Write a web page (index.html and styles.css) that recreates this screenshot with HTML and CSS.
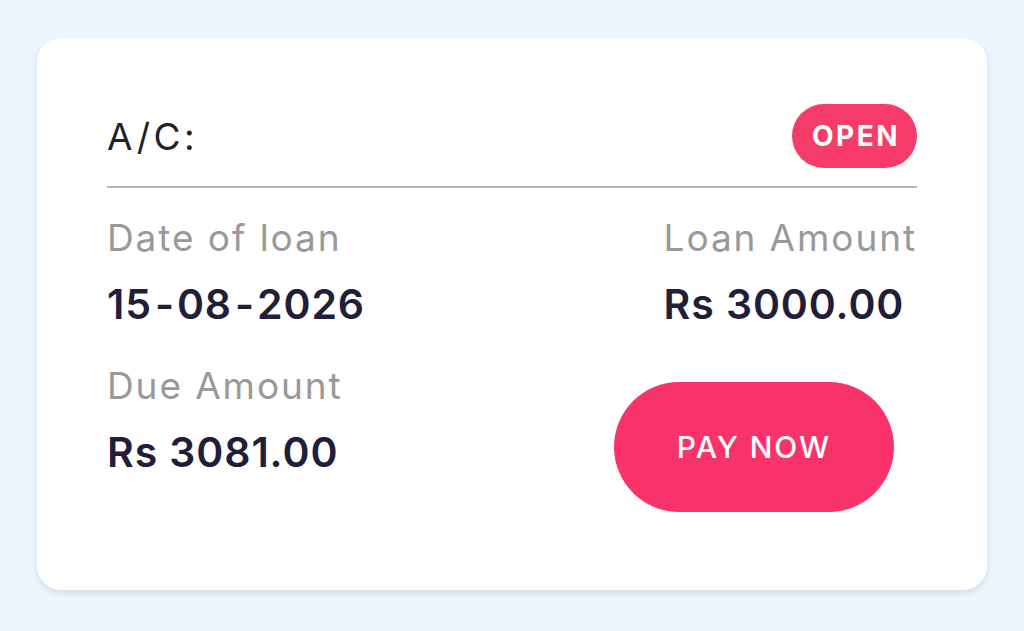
FILE: index.html
```html
<!DOCTYPE html>
<html lang="en">
<head>
<meta charset="utf-8">
<title>Loan card</title>
<link rel="stylesheet" href="styles.css">
</head>
<body>
<div class="page">
  <div class="card">
    <div class="head">
      <span class="acct">A/C:</span>
      <span class="badge">OPEN</span>
    </div>
    <div class="divider"></div>
    <div class="grid">
      <div class="cell">
        <div class="label">Date of loan</div>
        <div class="value date">15<span class="dash">-</span>08<span class="dash">-</span>2026</div>
      </div>
      <div class="cell right">
        <div class="stack">
          <div class="label">Loan Amount</div>
          <div class="value">Rs 3000.00</div>
        </div>
      </div>
      <div class="cell">
        <div class="label">Due Amount</div>
        <div class="value">Rs 3081.00</div>
      </div>
      <div class="cell right">
        <button class="pay">PAY NOW</button>
      </div>
    </div>
  </div>
</div>
</body>
</html>
```
FILE: styles.css
```css
* { box-sizing: border-box; }
html, body { margin: 0; padding: 0; }
body {
  background: #eef6fd;
  font-family: Inter, "Noto Sans", sans-serif;
  width: 1024px;
  height: 631px;
  overflow: hidden;
}
.page {
  padding: 38px 37px 0 37px;
}
.card {
  background: #ffffff;
  border-radius: 24px;
  height: 552px;
  padding: 0 70px;
  box-shadow: 0 3px 6px rgba(150, 170, 190, 0.35);
}
.head {
  display: flex;
  justify-content: space-between;
  align-items: center;
  padding-top: 66px;
  height: 130px;
}
.acct {
  font-size: 37px;
  color: #222226;
  letter-spacing: 3.5px;
}
.badge {
  background: #f53b68;
  color: #fff;
  font-weight: 700;
  font-size: 28px;
  letter-spacing: 2.5px;
  height: 64px;
  line-height: 64px;
  padding: 0 17px 0 20px;
  border-radius: 32px;
}
.divider {
  height: 2px;
  background: #adb5bd;
  margin-top: 18px;
}
.grid {
  display: grid;
  grid-template-columns: 1fr 1fr;
  row-gap: 28px;
  padding-top: 26px;
}
.cell.right {
  display: flex;
  flex-direction: column;
  align-items: flex-end;
}
.stack {
  text-align: left;
}
.label {
  font-size: 37px;
  color: #999999;
  line-height: 48px;
  letter-spacing: 1.9px;
}
.value {
  font-size: 41px;
  font-weight: 600;
  color: #221e3a;
  line-height: 60px;
  margin-top: 12px;
  letter-spacing: 0.9px;
}
.dash {
  display: inline-block;
  margin: 0 2px 0 3px;
}
.pay {
  margin-top: 20px;
  margin-right: 23px;
  width: 280px;
  height: 130px;
  border: none;
  border-radius: 65px;
  background: #f8336a;
  color: #fff;
  font-family: inherit;
  font-size: 30px;
  font-weight: 500;
  letter-spacing: 2px;
  padding: 0;
}
```
